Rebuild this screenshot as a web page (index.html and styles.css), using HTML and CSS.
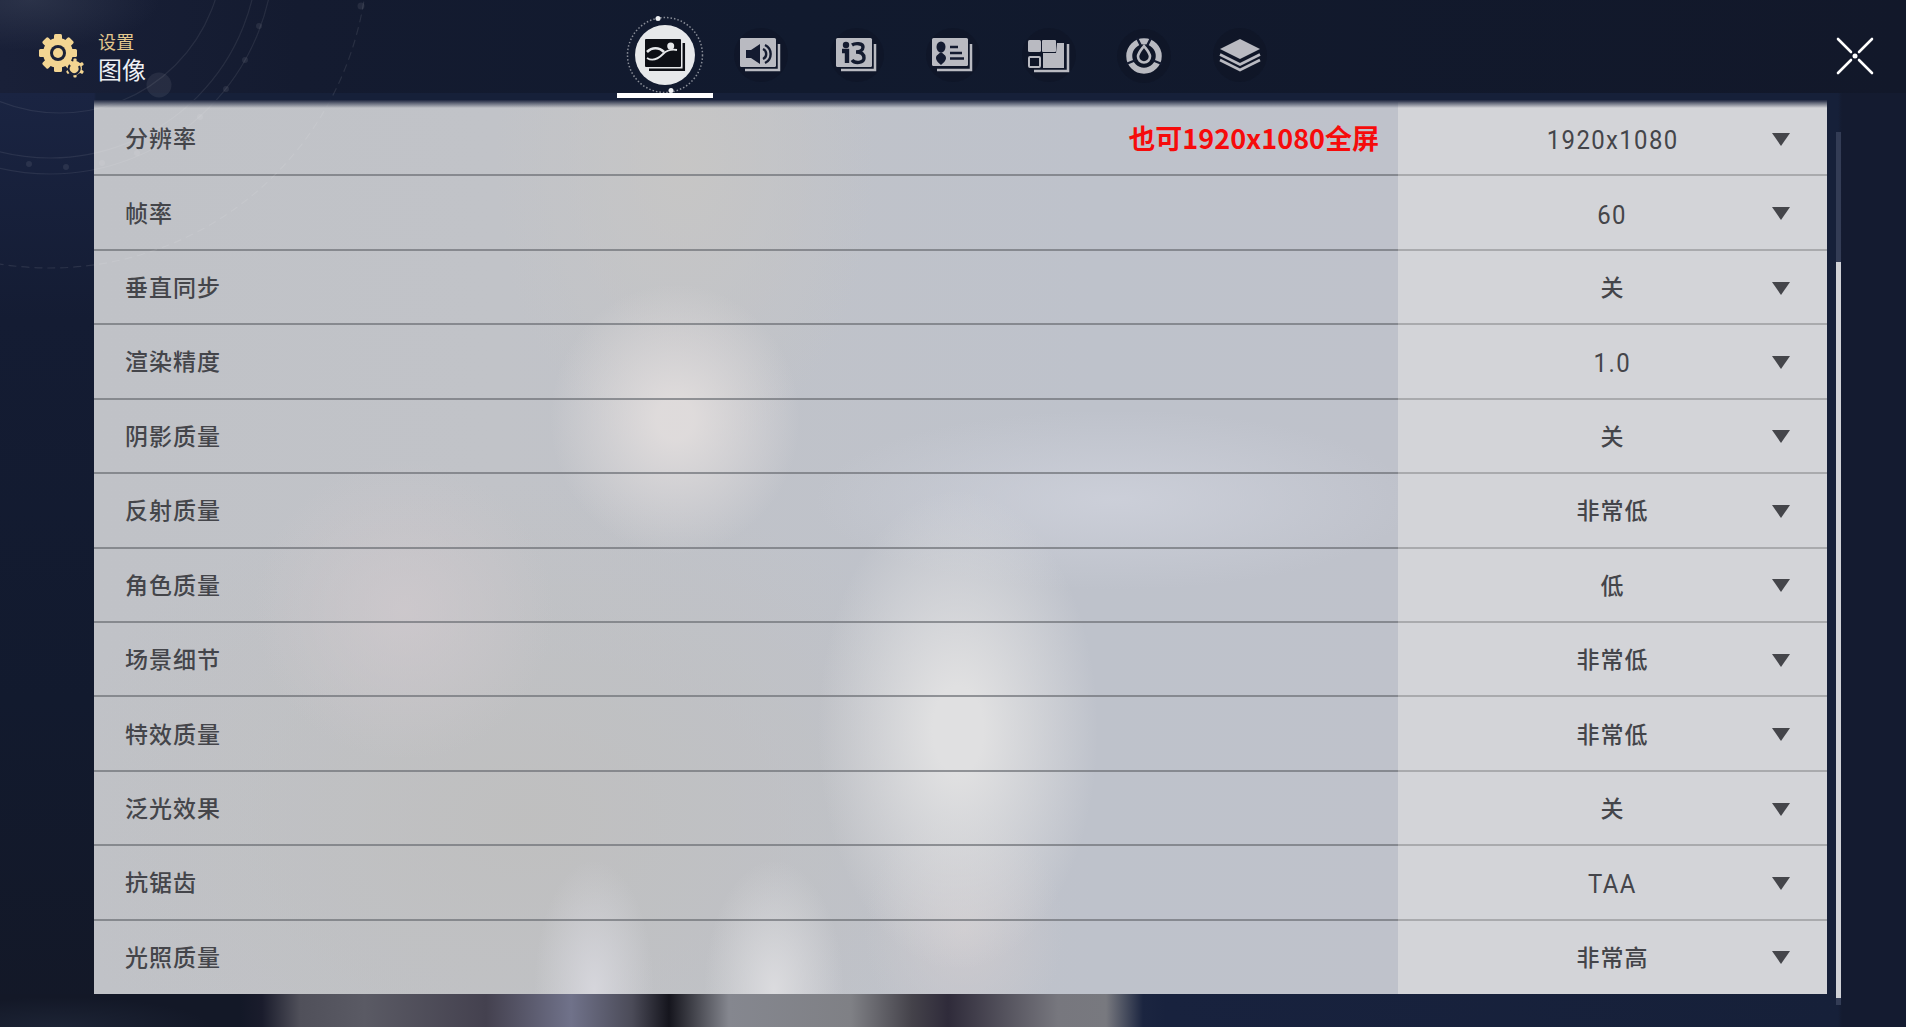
FILE: index.html
```html
<!DOCTYPE html>
<html lang="zh-CN">
<head>
<meta charset="utf-8">
<title>设置 图像</title>
<link rel="stylesheet" href="styles.css">
</head>
<body>
<header class="topbar">
  <div class="brand">
    <svg class="gear" viewBox="0 0 48 44" width="48" height="44" aria-hidden="true">
      <g class="gear-gold">
        <circle cx="20" cy="19" r="15"/>
        <rect x="16" y="0" width="8" height="38" rx="1.5"/>
        <rect x="16" y="0" width="8" height="38" rx="1.5" transform="rotate(45 20 19)"/>
        <rect x="16" y="0" width="8" height="38" rx="1.5" transform="rotate(90 20 19)"/>
        <rect x="16" y="0" width="8" height="38" rx="1.5" transform="rotate(135 20 19)"/>
      </g>
      <circle cx="20" cy="19" r="8" class="gear-hole"/>
      <circle cx="20" cy="19" r="5" class="gear-center"/>
      <g class="gear-gold">
        <circle cx="37" cy="34" r="7"/>
        <rect x="35.4" y="24.500" width="3.2" height="19" rx="1"/>
        <rect x="35.400" y="24.500" width="3.2" height="19" rx="1" transform="rotate(60 37 34)"/>
        <rect x="35.400" y="24.500" width="3.2" height="19" rx="1" transform="rotate(120 37 34)"/>
      </g>
      <path d="M32 31a5.500 5.500 0 1 0 9 1" class="gear-cut"/>
    </svg>
    <div class="brand-text">
      <span class="brand-small">设置</span>
      <span class="brand-big">图像</span>
    </div>
  </div>
  <nav class="tabs">
    <div class="tab tab-active">
      <svg viewBox="0 0 96 72" width="96" height="72" aria-hidden="true">
        <circle cx="48" cy="36" r="37.5" class="ring"/>
        <circle cx="41" cy="-0.5" r="2.5" class="ring-dot"/>
        <circle cx="54" cy="71.5" r="2.5" class="ring-dot"/>
        <circle cx="48" cy="36" r="30" class="disc"/>
        <path d="M32 50.700H66.800V24" class="active-back"/>
        <rect x="28" y="20" width="36" height="28" rx="1" class="active-front"/>
        <path d="M30 33C35 28 42 28 47 33" class="active-leaf"/>
        <path d="M30 39C36 43 41 40 46 35 50 31 54 30 60 31" class="active-hill"/>
        <circle cx="53.700" cy="27" r="3.500" class="active-fill"/>
      </svg>
    </div>
    <div class="tab">
      <svg viewBox="0 0 96 72" width="96" height="72" aria-hidden="true">
        <circle cx="48" cy="36" r="27" class="halo"/>
        <rect x="27" y="19" width="36" height="29" rx="1.5" class="ico"/>
        <path d="M32 51H66V25" class="ico-line"/>
        <path d="M33 31h5l9-6v20l-9-6h-5Z" class="cut"/>
        <path d="M50 30a5.500 5.500 0 0 1 0 10M52 26a10 10 0 0 1 0 18" class="cut-line"/>
      </svg>
    </div>
    <div class="tab">
      <svg viewBox="0 0 96 72" width="96" height="72" aria-hidden="true">
        <circle cx="48" cy="36" r="27" class="halo"/>
        <rect x="27" y="19" width="36" height="29" rx="1.5" class="ico"/>
        <path d="M32 51H66V25" class="ico-line"/>
        <circle cx="37" cy="26" r="3.200" class="cut"/>
        <path d="M33 32h5v12" class="cut-stem"/>
        <path d="M43 26c3-2 11-2 11 2 0 3-3 5-7 5 5 0 8 2 8 6 0 5-9 6-12 2" class="cut-thick"/>
      </svg>
    </div>
    <div class="tab">
      <svg viewBox="0 0 96 72" width="96" height="72" aria-hidden="true">
        <circle cx="48" cy="36" r="27" class="halo"/>
        <rect x="27" y="19" width="36" height="28" rx="1.5" class="ico"/>
        <path d="M32 51H66V25" class="ico-line"/>
        <ellipse cx="36" cy="28" rx="4.500" ry="5.500" class="cut"/>
        <path d="M36 33c2 2 5 3 5 6s-3 5-5 7c-2-2-5-4-5-7s3-4 5-6Z" class="cut"/>
        <path d="M45 28h8M45 34h12M45 39.500h14" class="cut-line"/>
      </svg>
    </div>
    <div class="tab">
      <svg viewBox="0 0 96 72" width="96" height="72" aria-hidden="true">
        <circle cx="48" cy="36" r="27" class="halo"/>
        <rect x="27" y="21" width="13" height="12" rx="1.500" class="ico"/>
        <rect x="41" y="21" width="14" height="12" rx="1" class="ico"/>
        <path d="M56 24H63V49H42V34H55Z" class="ico"/>
        <rect x="28" y="38" width="11" height="10" rx="1" class="ico-outline"/>
        <path d="M33 52H67V25" class="ico-line"/>
      </svg>
    </div>
    <div class="tab">
      <svg viewBox="0 0 96 72" width="96" height="72" aria-hidden="true">
        <circle cx="47" cy="37" r="27" class="halo"/>
        <circle cx="47" cy="37" r="14.750" class="wheel"/>
        <path d="M47 27c3 4 6 7 6 10.500a6 6 0 0 1-12 0c0-3.500 3-6.500 6-10.500Z" class="drop"/>
        <path d="M40 19l4 8M54 19l-4 8M29 45l10-4M65 45l-10-4" class="cut-line"/>
      </svg>
    </div>
    <div class="tab">
      <svg viewBox="0 0 96 72" width="96" height="72" aria-hidden="true">
        <circle cx="47" cy="36" r="27" class="halo"/>
        <path d="M47 20L67 30 47 40 27 30Z" class="ico"/>
        <path d="M27 35.500L47 45.500 67 35.500M27 41L47 51 67 41" class="ico-chevron"/>
      </svg>
    </div>
  </nav>
  <svg class="close" viewBox="0 0 40 40" width="40" height="40" aria-hidden="true">
    <path d="M3 3L16 16M37 3L24 16M3 37L16 24M37 37L24 24" class="close-line"/>
    <circle cx="20" cy="20" r="2.500" class="close-dot"/>
  </svg>
</header>

<main class="content">
  <section class="panel">
    <div class="row"><div class="label"><span>分辨率</span><strong class="note">也可1920x1080全屏</strong></div><div class="value"><span class="val-text latin">1920x1080</span><i class="arrow"></i></div></div>
    <div class="row"><div class="label"><span>帧率</span></div><div class="value"><span class="val-text latin">60</span><i class="arrow"></i></div></div>
    <div class="row"><div class="label"><span>垂直同步</span></div><div class="value"><span class="val-text">关</span><i class="arrow"></i></div></div>
    <div class="row"><div class="label"><span>渲染精度</span></div><div class="value"><span class="val-text latin">1.0</span><i class="arrow"></i></div></div>
    <div class="row"><div class="label"><span>阴影质量</span></div><div class="value"><span class="val-text">关</span><i class="arrow"></i></div></div>
    <div class="row"><div class="label"><span>反射质量</span></div><div class="value"><span class="val-text">非常低</span><i class="arrow"></i></div></div>
    <div class="row"><div class="label"><span>角色质量</span></div><div class="value"><span class="val-text">低</span><i class="arrow"></i></div></div>
    <div class="row"><div class="label"><span>场景细节</span></div><div class="value"><span class="val-text">非常低</span><i class="arrow"></i></div></div>
    <div class="row"><div class="label"><span>特效质量</span></div><div class="value"><span class="val-text">非常低</span><i class="arrow"></i></div></div>
    <div class="row"><div class="label"><span>泛光效果</span></div><div class="value"><span class="val-text">关</span><i class="arrow"></i></div></div>
    <div class="row"><div class="label"><span>抗锯齿</span></div><div class="value"><span class="val-text latin">TAA</span><i class="arrow"></i></div></div>
    <div class="row"><div class="label"><span>光照质量</span></div><div class="value"><span class="val-text">非常高</span><i class="arrow"></i></div></div>
  </section>
  <div class="scrollbar"><div class="thumb"></div></div>
</main>

<svg class="decor" viewBox="0 0 420 300" width="420" height="300" aria-hidden="true">
  <circle cx="60" cy="-50" r="163" class="arc"/>
  <circle cx="50" cy="-50" r="208" class="arc"/>
  <circle cx="50" cy="-50" r="224" class="arc"/>
  <circle cx="50" cy="-50" r="318" class="arc-dash"/>
  <circle cx="159" cy="85" r="12.500" class="decor-big"/>
  <circle cx="361" cy="6" r="3.500" class="decor-dot"/>
  <circle cx="259" cy="26" r="3" class="decor-dot"/>
  <circle cx="245" cy="60" r="3" class="decor-dot"/>
  <circle cx="226" cy="89" r="3" class="decor-dot"/>
  <circle cx="200" cy="117" r="3" class="decor-dot"/>
  <circle cx="137" cy="153" r="3" class="decor-dot"/>
  <circle cx="102" cy="163" r="3" class="decor-dot"/>
  <circle cx="66" cy="167" r="3" class="decor-dot"/>
  <circle cx="29" cy="164" r="3" class="decor-dot"/>
</svg>
</body>
</html>
```

FILE: styles.css
```css
* { box-sizing: border-box; }
html, body { height: 100%; }
body {
  margin: 0;
  width: 1906px;
  height: 1027px;
  overflow: hidden;
  position: relative;
  display: flex;
  flex-direction: column;
  font-family: "Noto Sans CJK SC", "Noto Sans", sans-serif;
  background:
    linear-gradient(90deg, transparent 94px, #162039 96px, #162039 1838px, #141b30 1842px),
    linear-gradient(180deg, #1a2442 93px, #141c33 320px, #121a2e 700px, #131827 1027px);
}

/* Header */
.topbar {
  height: 93px;
  flex: none;
  display: grid;
  grid-template-columns: 617px auto 1fr;
  background:
    radial-gradient(ellipse 130px 50px at 30px 0, rgba(70, 78, 98, .4), transparent),
    linear-gradient(90deg, #192038 0, #141b30 300px, #111a2e 800px, #12182a 1906px);
}
.brand {
  display: flex;
  align-items: flex-start;
  padding: 34px 0 0 38px;
  gap: 12px;
}
.gear { flex: none; }
.gear-gold, .gear-center { fill: #f3d592; }
.gear-hole { fill: #1a2137; }
.gear-cut { fill: none; stroke: #1a2137; stroke-width: 2.2; }
.brand-text {
  display: flex;
  flex-direction: column;
  margin-top: -5px;
}
.brand-small { font-size: 18px; line-height: 24px; color: #e3c88e; letter-spacing: .3px; }
.brand-big { font-size: 24px; line-height: 32px; color: #eef0f4; }

.tabs { display: flex; padding-top: 19px; }
.tab { width: 96px; height: 79px; flex: none; }
.tab svg { display: block; overflow: visible; }
.tab-active { border-bottom: 5px solid #fff; }
.ring { fill: none; stroke: rgba(255, 255, 255, .5); stroke-width: 1.500; stroke-dasharray: 1.500 2; }
.ring-dot { fill: #eef0f2; }
.disc { fill: #e6e8ea; }
.active-back { fill: none; stroke: #0d0f15; stroke-width: 2.500; }
.active-front { fill: #0d0f15; }
.active-leaf { fill: none; stroke: #e6e8ea; stroke-width: 2.600; }
.active-hill { fill: none; stroke: #e6e8ea; stroke-width: 1.800; }
.active-fill { fill: #e6e8ea; }
.halo { fill: rgba(9, 13, 27, .28); }
.ico { fill: #b9bac1; }
.ico-line { fill: none; stroke: #b9bac1; stroke-width: 2.500; }
.ico-outline { fill: none; stroke: #b9bac1; stroke-width: 2; }
.ico-chevron { fill: none; stroke: #b9bac1; stroke-width: 2.600; }
.cut { fill: #141b30; }
.cut-line { fill: none; stroke: #141b30; stroke-width: 2.400; }
.cut-thick { fill: none; stroke: #141b30; stroke-width: 3.400; }
.cut-stem { fill: none; stroke: #141b30; stroke-width: 4.400; }
.wheel { fill: none; stroke: #b9bac1; stroke-width: 6; }
.drop { fill: none; stroke: #b9bac1; stroke-width: 2.600; }
.close { justify-self: end; margin: 36px 31px 0 0; }
.close-line { stroke: #fff; stroke-width: 2.600; stroke-linecap: round; fill: none; }
.close-dot { fill: #fff; }

/* Content */
.content {
  flex: 1;
  display: flex;
  align-items: flex-start;
  padding: 7px 0 0 94px;
  background:
    radial-gradient(ellipse 150px 30px at 60px 100%, rgba(50, 62, 85, .3), transparent),
    linear-gradient(90deg,
      #131827 0, #131827 240px, #1a1c2c 262px, #50505a 300px, #5a5a64 365px, #44414f 486px, #70728a 571px,
      #4b4b58 632px, #15151d 669px, #85878f 729px, #7f8085 851px, #44424a 912px,
      #2f2b3a 948px, #77777e 1058px, #78797f 1106px, #1b2540 1143px, #18223e 1165px, #162039 1838px, #141b30 1842px);
  background-repeat: no-repeat;
  background-position: bottom;
  background-size: 100% 33px;
}
.panel {
  width: 1733px;
  height: 894px;
  flex: none;
  position: relative;
  overflow: hidden;
  padding-top: 2px;
  display: grid;
  grid-template-rows: repeat(12, 74.430px);
  background:
    radial-gradient(ellipse 125px 135px at 581px 319px, rgba(224, 220, 220, .95) 15%, rgba(224, 220, 220, 0)),
    radial-gradient(ellipse 140px 240px at 864px 630px, rgba(224, 224, 225, 1) 18%, rgba(224, 224, 225, 0)),
    radial-gradient(ellipse 300px 90px at 1020px 400px, rgba(207, 210, 220, .8), rgba(207, 210, 220, 0)),
    radial-gradient(ellipse 150px 150px at 310px 510px, rgba(207, 201, 205, .8), rgba(207, 201, 205, 0)),
    radial-gradient(ellipse 60px 130px at 500px 890px, rgba(216, 216, 222, .9), rgba(216, 216, 222, 0)),
    radial-gradient(ellipse 70px 130px at 680px 890px, rgba(222, 222, 225, .9), rgba(222, 222, 225, 0)),
    radial-gradient(ellipse 100px 120px at 870px 830px, rgba(208, 204, 207, .8), rgba(208, 204, 207, 0)),
    radial-gradient(ellipse 190px 300px at 590px 60px, rgba(199, 198, 197, .95), rgba(199, 198, 197, 0)),
    radial-gradient(ellipse 480px 340px at 430px 720px, rgba(191, 191, 191, .95), rgba(191, 191, 191, 0)),
    linear-gradient(90deg, #c0c2c7 0, #c1c3c8 400px, #bec2cb 1000px, #bfc2cb 1304px);
}
.panel::before {
  content: "";
  position: absolute;
  inset: 0 0 auto 0;
  height: 8px;
  background: linear-gradient(180deg, #1f2740, rgba(31, 39, 64, 0));
  z-index: 1;
}
.row {
  display: grid;
  grid-template-columns: 1304px 429px;
  min-height: 0;
}
.label, .value { border-bottom: 2px solid; }
.row:last-child .label, .row:last-child .value { border-bottom-color: transparent; }
.label {
  border-bottom-color: rgba(110, 112, 118, .7);
  display: flex;
  align-items: center;
  justify-content: space-between;
  padding: 0 19px 2px 31px;
  font-size: 23px;
  font-weight: 500;
  letter-spacing: 1px;
  color: #44454a;
}
.note {
  font-weight: 700;
  font-size: 27px;
  letter-spacing: 0;
  color: #f60b0b;
}
.value {
  border-bottom-color: #a9aaad;
  background: #d3d4d8;
  display: grid;
  grid-template-columns: 1fr auto 1fr;
  align-items: center;
  color: #44454a;
}
.val-text {
  grid-column: 2;
  font-size: 23px;
  font-weight: 500;
  letter-spacing: 1px;
  margin-bottom: 2px;
}
.latin {
  font-family: Roboto, "Noto Sans", sans-serif;
  font-size: 26px;
  font-weight: 400;
  letter-spacing: 1.500px;
  margin-bottom: 0;
  transform: translateY(2px) scaleX(.92);
}
.arrow {
  grid-column: 3;
  justify-self: end;
  margin: 2px 37px 0 0;
  width: 0;
  height: 0;
  border-left: 9.500px solid transparent;
  border-right: 9.500px solid transparent;
  border-top: 13px solid #44454a;
}
.scrollbar {
  flex: none;
  width: 5px;
  height: 873px;
  margin: 32px 0 0 9px;
  padding-top: 130px;
  background: #333c55;
}
.thumb { height: 736px; background: #d0d1d6; }

/* Background rings over the whole scene */
.decor {
  position: absolute;
  left: 0;
  top: 0;
  pointer-events: none;
}
.arc { fill: none; stroke: rgba(255, 255, 255, .08); stroke-width: 1.200; }
.arc-dash { fill: none; stroke: rgba(255, 255, 255, .09); stroke-width: 1.200; stroke-dasharray: 8 5; }
.decor-big { fill: rgba(255, 255, 255, .07); }
.decor-dot { fill: rgba(255, 255, 255, .08); }
```
